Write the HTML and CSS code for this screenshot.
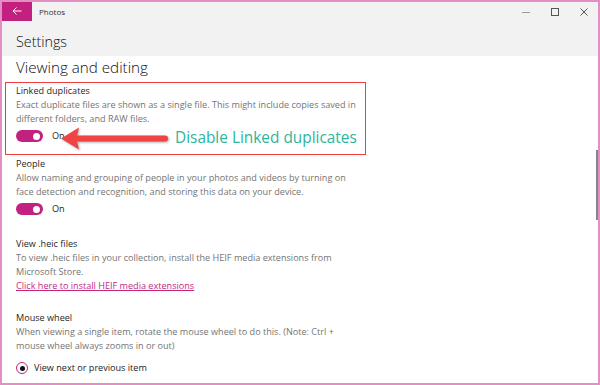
FILE: index.html
```html
<!DOCTYPE html>
<html lang="en">
<head>
    <meta charset="UTF-8">
    <title>Photos - Settings</title>
    <link rel="stylesheet" href="styles.css">
</head>
<body>
    <div class="window">
        <div class="titlebar">
            <div class="back-button">
                <svg width="10" height="8" viewBox="0 0 10 8"><path d="M9.5 4H1M4.5 0.5L1 4L4.5 7.5" fill="none" stroke="#fff" stroke-width="1"/></svg>
            </div>
            <span class="app-name">Photos</span>
            <div class="controls">
                <div class="control"><svg width="8" height="8" viewBox="0 0 8 8"><path d="M0 4.5H8" stroke="#999" stroke-width="1"/></svg></div>
                <div class="control"><svg width="8" height="8" viewBox="0 0 8 8"><rect x="0.5" y="0.5" width="7" height="7" fill="none" stroke="#555" stroke-width="1"/></svg></div>
                <div class="control"><svg width="8" height="8" viewBox="0 0 8 8"><path d="M0.5 0.5L7.5 7.5M7.5 0.5L0.5 7.5" stroke="#555" stroke-width="1"/></svg></div>
            </div>
        </div>

        <div class="header">
            <h1>Settings</h1>
        </div>

        <div class="content">
            <h2>Viewing and editing</h2>

            <div class="setting highlight">
                <div class="setting-title">Linked duplicates</div>
                <p class="setting-desc">Exact duplicate files are shown as a single file. This might include copies saved in<br>different folders, and RAW files.</p>
                <div class="toggle-row">
                    <span class="toggle"><span class="knob"></span></span>
                    <span>On</span>
                </div>
                <div class="callout">
                    <svg class="callout-arrow" width="117" height="30" viewBox="0 0 117 30">
                        <path d="M5 15.5L23 4.5L21 12.5H109A3 3 0 0 1 109 18.5H21L23 26.5Z" fill="#f04343"/>
                    </svg>
                    <span class="callout-text">Disable Linked duplicates</span>
                </div>
            </div>

            <div class="setting">
                <div class="setting-title">People</div>
                <p class="setting-desc">Allow naming and grouping of people in your photos and videos by turning on<br>face detection and recognition, and storing this data on your device.</p>
                <div class="toggle-row">
                    <span class="toggle"><span class="knob"></span></span>
                    <span>On</span>
                </div>
            </div>

            <div class="setting">
                <div class="setting-title">View .heic files</div>
                <p class="setting-desc">To view .heic files in your collection, install the HEIF media extensions from<br>Microsoft Store.</p>
                <a href="#" class="link">Click here to install HEIF media extensions</a>
            </div>

            <div class="setting">
                <div class="setting-title">Mouse wheel</div>
                <p class="setting-desc">When viewing a single item, rotate the mouse wheel to do this. (Note: Ctrl +<br>mouse wheel always zooms in or out)</p>
                <div class="radio-row">
                    <span class="radio"><span class="radio-dot"></span></span>
                    <span>View next or previous item</span>
                </div>
            </div>
        </div>

        <div class="scrollbar"></div>
    </div>
</body>
</html>
```

FILE: styles.css
```css
* {
    margin: 0;
    padding: 0;
    box-sizing: border-box;
}

body {
    font-family: 'Open Sans', 'Liberation Sans', sans-serif;
    background: #fff;
}

.window {
    width: 600px;
    height: 385px;
    border: 2px solid #e38fc4;
    background: #fff;
    position: relative;
    overflow: hidden;
}

.titlebar {
    display: flex;
    align-items: center;
    height: 19px;
    background: #f2f2f2;
}

.back-button {
    width: 30px;
    height: 21px;
    margin-top: -2px;
    background: #c3217f;
    display: flex;
    align-items: center;
    justify-content: center;
}

.app-name {
    margin-left: 7px;
    font-size: 8px;
    color: #333;
}

.controls {
    margin-left: auto;
    display: flex;
}

.control {
    width: 29px;
    height: 19px;
    display: flex;
    align-items: center;
    justify-content: center;
}

.header {
    height: 35px;
    background: #f2f2f2;
    padding: 11px 0 0 14px;
}

.header h1 {
    font-size: 14.3px;
    font-weight: 300;
    line-height: 20px;
    color: #111;
}

.content {
    padding-left: 14px;
}

.content h2 {
    font-size: 15.2px;
    font-weight: 300;
    line-height: 22px;
    color: #111;
    margin-bottom: 4px;
}

.setting {
    font-size: 9.1px;
    line-height: 14px;
    margin-bottom: 18px;
    white-space: nowrap;
}

.highlight {
    position: relative;
    width: 361px;
    margin: 0 0 2px -11px;
    padding: 1px 0 8px 10px;
    border: 1px solid #f03c3c;
}

.setting-title {
    color: #1f1f1f;
}

.setting-desc {
    color: #747474;
}

.toggle-row {
    display: flex;
    align-items: center;
    height: 20px;
    color: #222;
    font-size: 9.1px;
}

.toggle {
    width: 27px;
    height: 12px;
    border-radius: 6px;
    background: #c3217f;
    display: flex;
    align-items: center;
    justify-content: flex-end;
    padding-right: 3px;
    margin-right: 9px;
}

.knob {
    width: 7px;
    height: 7px;
    border-radius: 50%;
    background: #fff;
}

.callout {
    position: absolute;
    left: 50px;
    top: 40px;
    display: flex;
    align-items: center;
}

.callout-arrow {
    filter: drop-shadow(1px 1.5px 1px rgba(0, 0, 0, 0.35));
}

.callout-text {
    margin-left: 2px;
    font-size: 15.4px;
    line-height: 20px;
    color: #2db59a;
}

.link {
    display: block;
    color: #c4277f;
    text-decoration: underline;
}

.radio-row {
    display: flex;
    align-items: center;
    height: 20px;
    margin-top: 5px;
    color: #222;
    font-size: 9.1px;
}

.radio {
    width: 12px;
    height: 12px;
    border: 1.5px solid #c3217f;
    border-radius: 50%;
    display: flex;
    align-items: center;
    justify-content: center;
    margin-right: 6px;
}

.radio-dot {
    width: 5px;
    height: 5px;
    border-radius: 50%;
    background: #111;
}

.scrollbar {
    position: absolute;
    right: 0;
    top: 148px;
    width: 2px;
    height: 70px;
    background: #858585;
}
```
